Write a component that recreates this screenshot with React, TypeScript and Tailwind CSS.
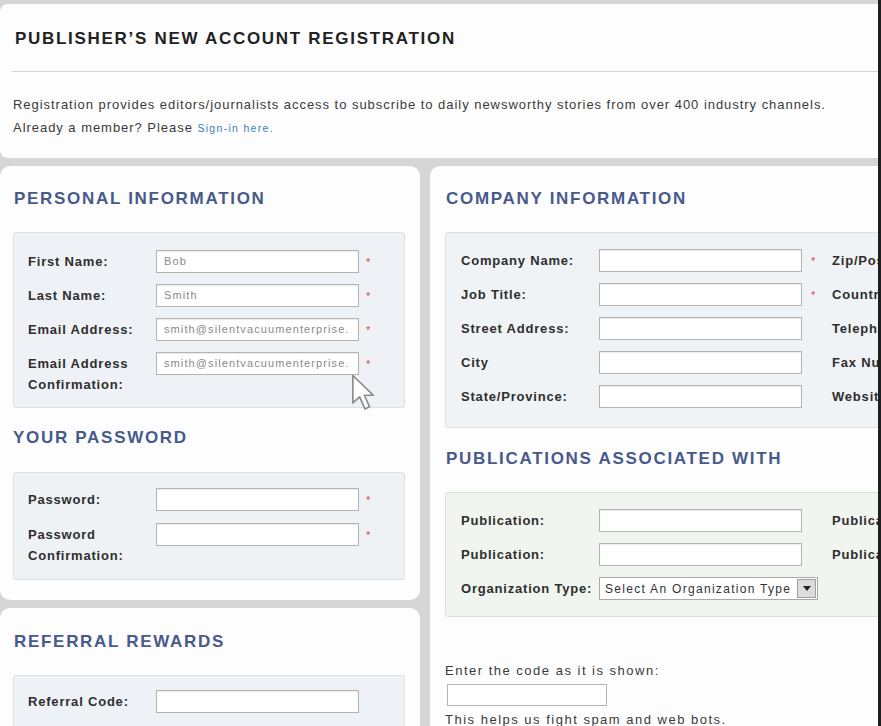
import React from "react";

const Star = () => <span className="text-[#d04a4a] text-[11px] leading-none">*</span>;

function Input({ value, w = "w-[203px]" }: { value?: string; w?: string }) {
  return (
    <div className={`${w} h-[23px] shrink-0 bg-white border border-[#b4b4b4] shadow-[inset_0_1px_1px_rgba(0,0,0,0.08)] flex items-center pl-[7px] overflow-hidden whitespace-nowrap text-[11px] leading-none tracking-[1.1px] text-[#8a8a8a]`}>
      {value}
    </div>
  );
}

function Label({ children, w }: { children: React.ReactNode; w: string }) {
  return (
    <div className={`${w} shrink-0 pt-[1px] text-[13px] leading-[21px] tracking-[0.8px] font-bold text-[#2e2e2e]`}>{children}</div>
  );
}

function Heading({ children }: { children: React.ReactNode }) {
  return (
    <div className="text-[17px] leading-[20px] font-bold tracking-[1.7px] text-[#485a8b] whitespace-nowrap">{children}</div>
  );
}

function StarSlot({ star, w = "w-[20px]", pl = "pl-[7px]" }: { star?: boolean; w?: string; pl?: string }) {
  return <div className={`${w} ${pl} h-[23px] shrink-0 pt-[3px] leading-none`}>{star ? <Star /> : null}</div>;
}

function LeftRow({ label, value, star = true }: { label: React.ReactNode; value?: string; star?: boolean }) {
  return (
    <div className="flex items-start">
      <Label w="w-[128px]">{label}</Label>
      <Input value={value} />
      <StarSlot star={star} />
    </div>
  );
}

function RightRow({ label, star, third }: { label: string; star?: boolean; third: string }) {
  return (
    <div className="flex items-start">
      <Label w="w-[138px]">{label}</Label>
      <Input />
      <StarSlot star={star} w="w-[30px]" pl="pl-[9px]" />
      <Label w="w-[140px] whitespace-nowrap">{third}</Label>
    </div>
  );
}

export default function App() {
  return (
    <div className="w-[881px] h-[726px] overflow-hidden bg-[#d6d6d6] flex font-['Liberation_Sans',Arial,sans-serif] relative">
      <div className="w-[878px] shrink-0 pt-[4px] flex flex-col gap-[8px]">
        {/* Top card */}
        <div className="h-[154px] shrink-0 bg-[#fdfdfd] rounded-l-[8px] pt-[26px] pl-[12px]">
          <div className="pl-[3px] text-[17px] leading-[18px] font-bold tracking-[1.7px] text-[#222] whitespace-nowrap">
            PUBLISHER’S NEW ACCOUNT REGISTRATION
          </div>
          <div className="mt-[23px] h-px bg-[#d4d4d4]" />
          <div className="mt-[21px] pl-[1px] text-[13px] leading-[23px] tracking-[0.96px] text-[#3a3a3a] whitespace-nowrap">
            <div>Registration provides editors/journalists access to subscribe to daily newsworthy stories from over 400 industry channels.</div>
            <div>
              Already a member? Please{" "}
              <span className="text-[10.5px] tracking-[1.3px] text-[#3a7fb8]">Sign-in here.</span>
            </div>
          </div>
        </div>

        {/* Columns */}
        <div className="flex gap-[10px] items-start">
          {/* Left column */}
          <div className="w-[420px] shrink-0 flex flex-col gap-[8px]">
            <div className="h-[434px] bg-[#fdfdfd] rounded-[10px] px-[13px] pt-[23px] relative">
              <div className="pl-[1px]"><Heading>PERSONAL INFORMATION</Heading></div>
              <div className="mt-[23px] w-[392px] bg-[#eef2f6] border border-[#d9dfe5] rounded-[3px] pl-[14px] pt-[17px] pb-[12px] flex flex-col gap-[11px]">
                <LeftRow label="First Name:" value="Bob" />
                <LeftRow label="Last Name:" value="Smith" />
                <LeftRow label="Email Address:" value="smith@silentvacuumenterprise." />
                <LeftRow label={<>Email Address<br />Confirmation:</>} value="smith@silentvacuumenterprise." />
              </div>
              <div className="mt-[20px]"><Heading>YOUR PASSWORD</Heading></div>
              <div className="mt-[24px] w-[392px] bg-[#eff2f4] border border-[#d9dfe3] rounded-[3px] pl-[14px] pt-[15px] pb-[13px] flex flex-col gap-[12px]">
                <LeftRow label="Password:" />
                <LeftRow label={<>Password<br />Confirmation:</>} />
              </div>
              {/* mouse cursor */}
              <svg className="absolute left-[351px] top-[208px]" width="28" height="38" viewBox="0 0 18 25">
                <path d="M1 1 L1 19 L5.5 15 L9 23 L12 21.6 L8.6 14 L14.5 14 Z" fill="#ffffff" stroke="#8c8c8c" strokeWidth="1.1" strokeLinejoin="round" />
              </svg>
            </div>
            <div className="h-[200px] bg-[#fdfdfd] rounded-t-[10px] px-[13px] pt-[24px]">
              <div className="pl-[1px]"><Heading>REFERRAL REWARDS</Heading></div>
              <div className="mt-[23px] w-[392px] h-[120px] bg-[#eef2f6] border border-[#d9dfe5] rounded-[3px] pl-[14px] pt-[14px]">
                <LeftRow label="Referral Code:" star={false} />
              </div>
            </div>
          </div>

          {/* Right column */}
          <div className="flex-1 h-[600px] bg-[#fdfdfd] rounded-tl-[10px] overflow-hidden pl-[15px] pt-[23px]">
            <div className="pl-[1px]"><Heading>COMPANY INFORMATION</Heading></div>
            <div className="mt-[23px] w-[700px] bg-[#f0f3f5] border border-[#d9dfe3] rounded-[3px] pl-[15px] pt-[16px] pb-[19px] flex flex-col gap-[11px]">
              <RightRow label="Company Name:" star third="Zip/Postal Code:" />
              <RightRow label="Job Title:" star third="Country:" />
              <RightRow label="Street Address:" third="Telephone:" />
              <RightRow label="City" third="Fax Number:" />
              <RightRow label="State/Province:" third="Website:" />
            </div>
            <div className="mt-[21px] pl-[1px]"><Heading>PUBLICATIONS ASSOCIATED WITH</Heading></div>
            <div className="mt-[23px] w-[700px] bg-[#f1f5ef] border border-[#d9e0d6] rounded-[3px] pl-[15px] pt-[16px] pb-[16px] flex flex-col gap-[11px]">
              <RightRow label="Publication:" third="Publication:" />
              <RightRow label="Publication:" third="Publication:" />
              <div className="flex items-start">
                <Label w="w-[138px] whitespace-nowrap">Organization Type:</Label>
                <div className="w-[219px] h-[23px] bg-white border border-[#a8a8a8] flex items-center">
                  <span className="flex-1 pl-[5px] text-[12px] tracking-[1.3px] text-[#333] whitespace-nowrap overflow-hidden">Select An Organization Type</span>
                  <div className="w-[19px] h-[19px] mr-[1px] bg-[#dcdcdc] border border-[#a0a0a0] flex items-center justify-center">
                    <svg width="8" height="5" viewBox="0 0 8 5"><path d="M0 0 L8 0 L4 5 Z" fill="#222" /></svg>
                  </div>
                </div>
              </div>
            </div>
            <div className="mt-[46px] text-[13px] leading-[16px] tracking-[1.5px] text-[#3a3a3a] whitespace-nowrap">Enter the code as it is shown:</div>
            <div className="mt-[5px] ml-[2px] w-[160px] h-[22px] bg-white border border-[#b4b4b4]" />
            <div className="mt-[6px] text-[13px] leading-[16px] tracking-[1.5px] text-[#3a3a3a] whitespace-nowrap">This helps us fight spam and web bots.</div>
          </div>
        </div>
      </div>
      <div className="w-[3px] shrink-0 bg-[#1e1e1e]" />
    </div>
  );
}
